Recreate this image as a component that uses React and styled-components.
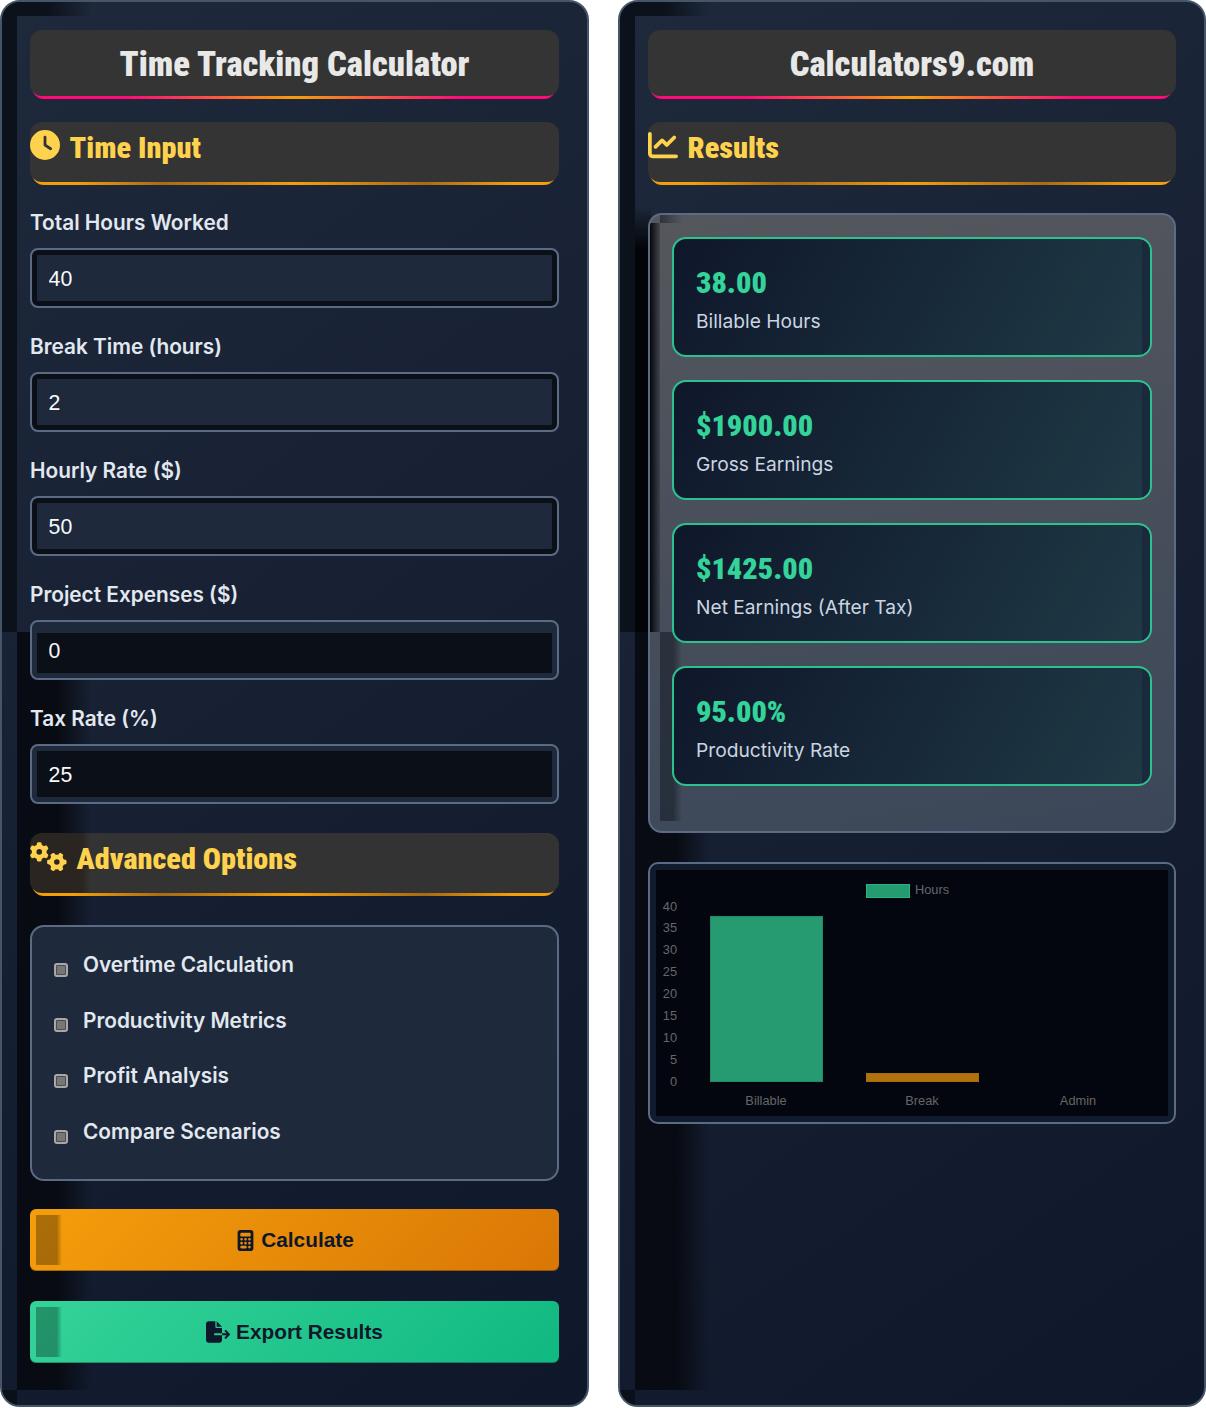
import React from 'react'
import styled, { createGlobalStyle, css } from 'styled-components'
import { FaClock, FaChartLine, FaGears, FaCalculator, FaFileExport } from 'react-icons/fa6'

const GlobalStyle = createGlobalStyle`
  html, body { margin: 0; padding: 0; background: #fff; }
  body { font-family: Inter, "Liberation Sans", sans-serif; }
  * { box-sizing: border-box; }
`

const Page = styled.div`
  display: grid;
  grid-template-columns: 589px 588px;
  column-gap: 29px;
  height: 1408px;
  align-items: start;
`

const Panel = styled.section`
  position: relative;
  height: 1407px;
  padding: 28px;
  border: 2px solid #475569;
  border-radius: 20px;
  background: linear-gradient(145deg, #1e293b 0%, #0f172a 100%);
  overflow: hidden;
`

const Content = styled.div`
  position: relative;
  z-index: 1;
`

const ShadeLeftTop = styled.span`
  position: absolute;
  left: 0; top: 0; width: 15px; height: 630px;
  background: #0c121c;
`
const ShadeTop = styled.span`
  position: absolute;
  left: 15px; top: 0; width: 75px; height: 14px;
  background: linear-gradient(90deg, #0c121c 40%, rgba(12, 18, 28, 0));
`
const ShadeLeftBottom = styled.span`
  position: absolute;
  left: 15px; top: 630px; width: 75px; height: 758px;
  background: linear-gradient(90deg, rgba(7, 10, 17, 0.95) 55%, rgba(7, 10, 17, 0));
`
const ShadeCorner = styled.span`
  position: absolute;
  left: 0; bottom: 0; width: 15px; height: 15px;
  background: #0a0f1a;
`
const ShadeMid = styled.span`
  position: absolute;
  left: 15px; top: 205px; width: 16px; height: 425px;
  background: linear-gradient(180deg, rgba(2, 4, 8, 0), #020408 10%);
`

// grey face with a thin gradient line peeking out under it
const ribbon = css`
  position: relative;
  isolation: isolate;
  &::before {
    content: '';
    position: absolute;
    z-index: -1;
    inset: 0 0 3px 0;
    border-radius: 12px;
    background: ${p => p.$face || '#343434'};
  }
  &::after {
    content: '';
    position: absolute;
    z-index: -2;
    left: 2px;
    right: 3px;
    bottom: 0;
    height: 24px;
    border-radius: 0 0 12px 12px;
    background: ${p => p.$line};
  }
`

const Title = styled.h1`
  ${ribbon}
  margin: 0 0 23px;
  height: 69px;
  padding-bottom: 1px;
  display: flex;
  align-items: center;
  justify-content: center;
  font-family: Roboto, sans-serif;
  font-stretch: condensed;
  font-weight: 900;
  font-size: 34.6px;
  color: #e8e8e6;
`

const SectionHead = styled.h2`
  ${ribbon}
  margin: 0 0 ${p => p.$gap}px;
  height: 63px;
  padding-bottom: 12px;
  display: flex;
  align-items: center;
  gap: 9.6px;
  font-family: Roboto, sans-serif;
  font-stretch: condensed;
  font-weight: 900;
  font-size: 30.2px;
  color: #ffd24d;
  svg { flex: none; margin-top: -5px; }
`

const Fields = styled.div`
  padding-bottom: 4px;
`

const Field = styled.div`
  margin-bottom: 25px;
`

const Label = styled.label`
  display: block;
  margin-bottom: 11px;
  height: 28px;
  line-height: 28px;
  font-weight: 600;
  font-size: 20.8px;
  color: #e2e8f0;
`

const Input = styled.input`
  display: block;
  width: 100%;
  height: 60px;
  padding: 2px 16.6px 0;
  border: 2px solid #5b6b84;
  border-radius: 8px;
  outline: none;
  font-family: "Liberation Sans", sans-serif;
  font-size: 21.3px;
  color: #f8fafc;
  background: ${p => (p.$dim ? '#0a0f18' : '#1e293b')};
  box-shadow: ${p => (p.$dim
    ? `inset 0 0 0 5px #1e293b, inset 0 ${p.$dim}px 0 #1e293b`
    : 'inset 0 0 0 5px #0a0f18')};
`

const Options = styled.div`
  margin-bottom: 28px;
  height: 256px;
  padding: 10px 22px;
  display: flex;
  flex-direction: column;
  border: 2px solid #5b6b84;
  border-radius: 14px;
  background: #1e293b;
`

const Option = styled.label`
  height: 55.6px;
  flex: none;
  display: flex;
  align-items: center;
  gap: 15px;
  font-weight: 600;
  font-size: 20.8px;
  color: #e2e8f0;
`

const Check = styled.input`
  appearance: none;
  flex: none;
  margin: 10px 0 0;
  width: 14px;
  height: 14px;
  border: 2px solid #a8a8a8;
  border-radius: 3px;
  background: #777777;
  box-shadow: inset 0 0 0 1px #4c4c4c;
`

const Button = styled.button`
  position: relative;
  display: flex;
  align-items: center;
  justify-content: center;
  gap: ${p => p.$gap}px;
  width: 100%;
  height: 62px;
  margin-bottom: 30px;
  border: none;
  border-radius: 6px;
  font-family: "Liberation Sans", sans-serif;
  font-weight: 700;
  font-size: 20.8px;
  color: #0f172a;
  background: linear-gradient(135deg, ${p => p.$from}, ${p => p.$to});
  box-shadow: inset 0 -1px 0 rgba(0, 0, 0, 0.3);
  overflow: hidden;
  &::before {
    content: '';
    position: absolute;
    left: 6px;
    top: 6px;
    bottom: 6px;
    width: 26px;
    background: linear-gradient(90deg, rgba(0, 0, 0, 0.3) 80%, rgba(0, 0, 0, 0));
  }
`

const Results = styled.div`
  position: relative;
  height: 620px;
  margin-bottom: 29px;
  padding: 22px;
  display: flex;
  flex-direction: column;
  gap: 23px;
  border: 2px solid #5b6b84;
  border-radius: 14px;
  background:
    linear-gradient(90deg, rgba(20, 26, 36, 0.6), rgba(20, 26, 36, 0)) 10px 0 / 22px 8px no-repeat,
    linear-gradient(170deg, #55575d 0%, #3b4759 100%);
  overflow: hidden;
  &::before {
    content: '';
    position: absolute;
    left: 0;
    top: 8px;
    height: 409px;
    width: 10px;
    background: linear-gradient(90deg, #05070c, rgba(5, 7, 12, 0.2));
  }
  &::after {
    content: '';
    position: absolute;
    left: 10px;
    top: 417px;
    bottom: 10px;
    width: 22px;
    background: linear-gradient(90deg, rgba(20, 26, 36, 0.55) 60%, rgba(20, 26, 36, 0));
  }
`

const Card = styled.div`
  position: relative;
  z-index: 1;
  height: 120px;
  padding: 25px 22px;
  flex: none;
  border: 2px solid #2cc28f;
  border-radius: 14px;
  background: linear-gradient(120deg, #0f172a 0%, #1f3a46 100%);
  overflow: hidden;
  &::after {
    content: '';
    position: absolute;
    right: 0;
    top: 0;
    bottom: 0;
    width: 8px;
    background: #1a2a3c;
  }
`

const Value = styled.div`
  height: 38px;
  line-height: 38px;
  font-family: Roboto, sans-serif;
  font-stretch: condensed;
  font-weight: 900;
  font-size: 30.2px;
  color: #34d399;
`

const CardLabel = styled.div`
  margin-top: 7px;
  font-size: 19.2px;
  color: #cbd5e1;
`

const ChartBox = styled.div`
  height: 262px;
  padding: 6px;
  border: 2px solid #5b6b84;
  border-radius: 10px;
  background: #111b2e;
  svg { display: block; width: 100%; background: #03060f; }
  text { font-family: "Liberation Sans", sans-serif; font-size: 12.8px; fill: #666666; }
`

const ticks = [40, 35, 30, 25, 20, 15, 10, 5, 0]
const bars = ['Billable', 'Break', 'Admin']

const HoursChart = () => (
  <svg height="246" viewBox="0 0 512 246" preserveAspectRatio="xMinYMin">
    <rect x="210.5" y="14.5" width="43" height="13" fill="#269a70" stroke="#22b884" />
    <text x="259" y="24">Hours</text>
    {ticks.map((t, i) => (
      <text key={t} x="21" y={40.5 + i * 21.9} textAnchor="end">{t}</text>
    ))}
    <rect x="54.5" y="46.5" width="112" height="165" fill="#269a70" stroke="#1f8a64" />
    <rect x="210.5" y="203.5" width="112" height="8" fill="#b0720c" stroke="#a86d0c" />
    {bars.map((b, i) => (
      <text key={b} x={110 + i * 156} y={235} textAnchor="middle">{b}</text>
    ))}
  </svg>
)

const Shades = () => (
  <>
    <ShadeLeftTop />
    <ShadeTop />
    <ShadeLeftBottom />
    <ShadeCorner />
  </>
)

const pinkLine = 'linear-gradient(90deg, #ff0a78 0%, #ff0a78 18%, #f59e0b 50%, #ff0a78 82%, #ff0a78 100%)'
const amberLine = 'linear-gradient(90deg, #f59e0b 0%, #f59e0b 8%, #a86c14 25%, #f59e0b 50%, #a86c14 75%, #f59e0b 92%, #f59e0b 100%)'
const tintedFace = 'linear-gradient(90deg, #2a2520 52px, #333333 60px)'

const fields = [
  ['Total Hours Worked', '40', 0],
  ['Break Time (hours)', '2', 0],
  ['Hourly Rate ($)', '50', 0],
  ['Project Expenses ($)', '0', 11],
  ['Tax Rate (%)', '25', 5],
]

const options = ['Overtime Calculation', 'Productivity Metrics', 'Profit Analysis', 'Compare Scenarios']

const results = [
  ['38.00', 'Billable Hours'],
  ['$1900.00', 'Gross Earnings'],
  ['$1425.00', 'Net Earnings (After Tax)'],
  ['95.00%', 'Productivity Rate'],
]

const App = () => (
  <Page>
    <GlobalStyle />
    <Panel>
      <Shades />
      <Content>
        <Title $line={pinkLine}>Time Tracking Calculator</Title>
        <SectionHead $gap={24} $line={amberLine}><FaClock size={30} />Time Input</SectionHead>
        <Fields>
          {fields.map(([label, value, dim]) => (
            <Field key={label}>
              <Label>{label}</Label>
              <Input type="number" defaultValue={value} $dim={dim} />
            </Field>
          ))}
        </Fields>
        <SectionHead $gap={29} $line={amberLine} $face={tintedFace}><FaGears size={37} />Advanced Options</SectionHead>
        <Options>
          {options.map(o => (
            <Option key={o}><Check type="checkbox" />{o}</Option>
          ))}
        </Options>
        <Button $gap={5} $from="#f59e0b" $to="#d97706"><FaCalculator size={21} />Calculate</Button>
        <Button $gap={6} $from="#34d399" $to="#10b981"><FaFileExport size={24} />Export Results</Button>
      </Content>
    </Panel>
    <Panel>
      <Shades />
      <ShadeMid />
      <Content>
        <Title $line={pinkLine}>Calculators9.com</Title>
        <SectionHead $gap={28} $line={amberLine}><FaChartLine size={30} />Results</SectionHead>
        <Results>
          {results.map(([value, label]) => (
            <Card key={label}>
              <Value>{value}</Value>
              <CardLabel>{label}</CardLabel>
            </Card>
          ))}
        </Results>
        <ChartBox><HoursChart /></ChartBox>
      </Content>
    </Panel>
  </Page>
)

export default App
